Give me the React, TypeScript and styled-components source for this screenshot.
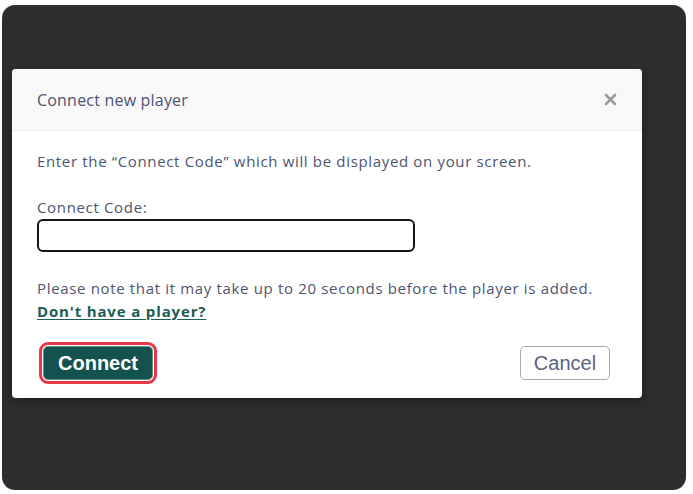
import React, { useState } from "react";
import styled, { createGlobalStyle } from "styled-components";

const GlobalStyle = createGlobalStyle`
  html, body {
    margin: 0;
    background: #ffffff;
  }
  * {
    box-sizing: border-box;
  }
`;

const App = () => {
  const [code, setCode] = useState("");

  return (
    <>
      <GlobalStyle />
      <SBackdrop>
        <SModal>
          <SHeader>
            <STitle>Connect new player</STitle>
            <SClose aria-label="close">
              <svg width="13" height="13" viewBox="0 0 13 13">
                <path d="M2 2L11 11M11 2L2 11" stroke="#9a9a9a" strokeWidth="2.6" strokeLinecap="round" />
              </svg>
            </SClose>
          </SHeader>
          <SBody>
            <SText>Enter the “Connect Code” which will be displayed on your screen.</SText>
            <SLabel htmlFor="connect-code">Connect Code:</SLabel>
            <SInput id="connect-code" value={code} onChange={(e) => setCode(e.target.value)} />
            <SNote>Please note that it may take up to 20 seconds before the player is added.</SNote>
            <SLink href="#">Don't have a player?</SLink>
          </SBody>
          <SFooter>
            <SConnectButton>Connect</SConnectButton>
            <SCancelButton>Cancel</SCancelButton>
          </SFooter>
        </SModal>
      </SBackdrop>
    </>
  );
};

export default App;

const SBackdrop = styled.div`
  margin: 5px 7px 0 2px;
  height: 485px;
  background: #2e2e2e;
  border-radius: 13px;
  padding: 64px 0 0 10px;
`;

const SModal = styled.div`
  width: 630px;
  height: 329px;
  background: #ffffff;
  border-radius: 4px;
  overflow: hidden;
  box-shadow: 0 4px 14px rgba(0, 0, 0, 0.35);
  display: flex;
  flex-direction: column;
`;

const SHeader = styled.div`
  height: 62px;
  background: #f8f8f8;
  border-bottom: 1px solid #ececec;
  display: flex;
  align-items: center;
  justify-content: space-between;
  padding: 0 25px 0 25px;
`;

const STitle = styled.h2`
  margin: 0;
  font-family: "Open Sans", "Liberation Sans", sans-serif;
  font-size: 16px;
  letter-spacing: 0.2px;
  font-weight: 400;
  color: #4d5570;
`;

const SClose = styled.button`
  border: none;
  background: none;
  padding: 0;
  display: flex;
  cursor: pointer;
`;

const SBody = styled.div`
  display: flex;
  flex-direction: column;
  align-items: flex-start;
  padding: 20px 25px 0 25px;
  font-family: "Open Sans", "Liberation Sans", sans-serif;
  font-size: 15px;
  letter-spacing: 0.66px;
  line-height: 20px;
  color: #4d5570;
`;

const SText = styled.p`
  margin: 0 0 26px 0;
`;

const SLabel = styled.label`
  margin-bottom: 2px;
`;

const SInput = styled.input`
  width: 378px;
  height: 33px;
  border: 2px solid #141414;
  border-radius: 6px;
  padding: 0 8px;
  font-family: inherit;
  font-size: 14px;
  outline: none;
`;

const SNote = styled.p`
  margin: 26px 0 3px 0;
`;

const SLink = styled.a`
  font-weight: 700;
  letter-spacing: 0.85px;
  color: #1c5d55;
  text-decoration: underline;
  text-underline-offset: 2px;
`;

const SFooter = styled.div`
  display: flex;
  justify-content: space-between;
  align-items: center;
  padding: 25px 32px 0 31px;
`;

const SConnectButton = styled.button`
  width: 110px;
  height: 34px;
  background: #13524e;
  color: #ffffff;
  border: 1px solid #6c8c88;
  border-radius: 5px;
  outline: 3px solid #e63a4b;
  outline-offset: 1px;
  font-family: "Liberation Sans", Arial, sans-serif;
  font-size: 20px;
  font-weight: 700;
  padding: 0;
  cursor: pointer;
`;

const SCancelButton = styled.button`
  width: 90px;
  height: 34px;
  background: #ffffff;
  color: #5c6380;
  border: 1px solid #a8a8a8;
  border-radius: 5px;
  font-family: "Liberation Sans", Arial, sans-serif;
  font-size: 20px;
  padding: 0;
  cursor: pointer;
`;
